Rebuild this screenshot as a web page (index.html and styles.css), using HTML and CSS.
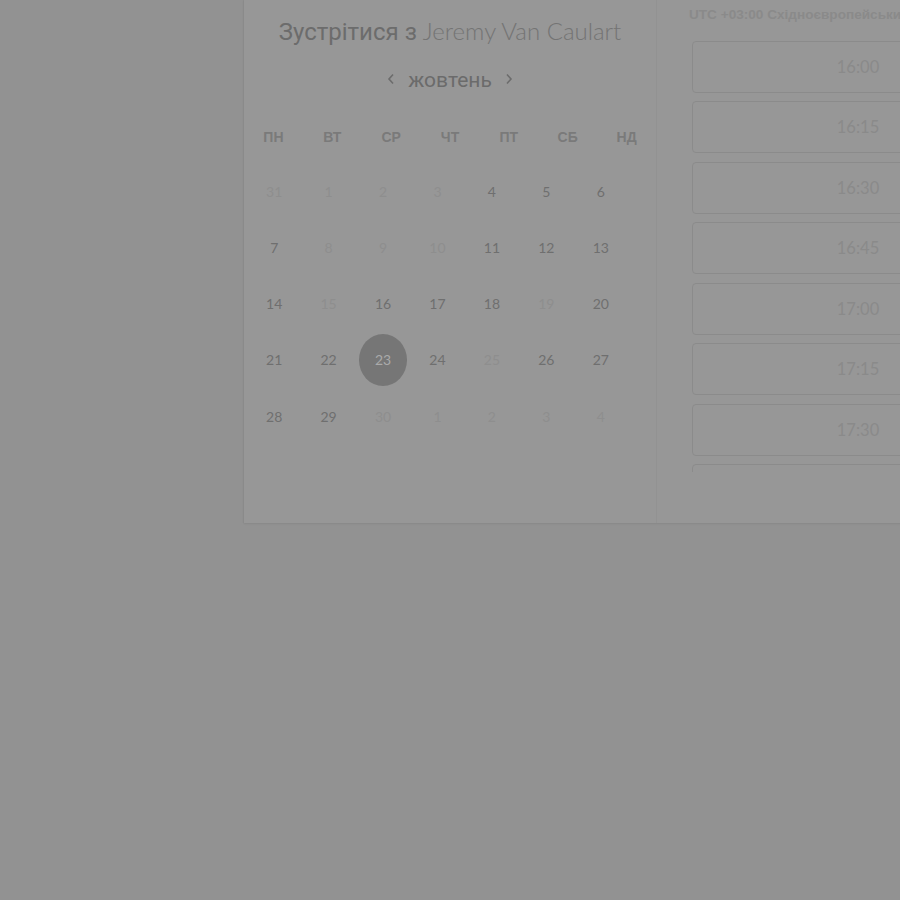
FILE: index.html
```html
<!DOCTYPE html>
<html lang="uk">
<head>
<meta charset="utf-8">
<title>Зустрітися з Jeremy Van Caulart</title>
<link rel="stylesheet" href="styles.css">
</head>
<body>
<div class="card">
  <section class="cal">
    <h1 class="title"><span class="title-uk">Зустрітися з</span> <span class="title-name">Jeremy Van Caulart</span></h1>
    <div class="month">
      <span class="chev">
        <svg width="8" height="12" viewBox="0 0 8 12"><path d="M6 1.5 L2 6 L6 10.5" fill="none" stroke="#6c6c6c" stroke-width="1.6"/></svg>
      </span>
      <span class="month-name">жовтень</span>
      <span class="chev">
        <svg width="8" height="12" viewBox="0 0 8 12"><path d="M2 1.5 L6 6 L2 10.5" fill="none" stroke="#6c6c6c" stroke-width="1.6"/></svg>
      </span>
    </div>
    <div class="weekdays">
      <span>ПН</span><span>ВТ</span><span>СР</span><span>ЧТ</span><span>ПТ</span><span>СБ</span><span>НД</span>
    </div>
    <div class="days">
      <span class="day off">31</span><span class="day off">1</span><span class="day off">2</span><span class="day off">3</span><span class="day">4</span><span class="day">5</span><span class="day">6</span>
      <span class="day">7</span><span class="day off">8</span><span class="day off">9</span><span class="day off">10</span><span class="day">11</span><span class="day">12</span><span class="day">13</span>
      <span class="day">14</span><span class="day off">15</span><span class="day">16</span><span class="day">17</span><span class="day">18</span><span class="day off">19</span><span class="day">20</span>
      <span class="day">21</span><span class="day">22</span><span class="day sel">23</span><span class="day">24</span><span class="day off">25</span><span class="day">26</span><span class="day">27</span>
      <span class="day">28</span><span class="day">29</span><span class="day off">30</span><span class="day off">1</span><span class="day off">2</span><span class="day off">3</span><span class="day off">4</span>
    </div>
  </section>
  <section class="times">
    <div class="tz">UTC +03:00 Східноєвропейський час</div>
    <div class="slots">
      <div class="slot">16:00</div>
      <div class="slot">16:15</div>
      <div class="slot">16:30</div>
      <div class="slot">16:45</div>
      <div class="slot">17:00</div>
      <div class="slot">17:15</div>
      <div class="slot">17:30</div>
      <div class="slot">17:45</div>
    </div>
  </section>
</div>
</body>
</html>
```
FILE: styles.css
```css
html, body {
  margin: 0;
  padding: 0;
}
body {
  background: #929292;
  height: 900px;
  overflow: hidden;
  font-family: "Roboto", "Liberation Sans", sans-serif;
}
.card {
  margin-left: 244px;
  width: 840px;
  height: 523px;
  display: flex;
  background: #979797;
  box-shadow: 0 1px 2px rgba(0, 0, 0, 0.07), -1px 0 1px rgba(0, 0, 0, 0.03);
}
.cal {
  width: 412px;
  flex: none;
  border-right: 1px solid #929292;
  display: flex;
  flex-direction: column;
}
.title {
  margin: 16px 0 0;
  font-weight: 400;
  font-size: 24px;
  line-height: 30px;
  text-align: center;
  white-space: nowrap;
}
.title-uk {
  font-family: "Roboto", sans-serif;
  color: #6c6c6c;
}
.title-name {
  font-family: "Lato", sans-serif;
  font-weight: 300;
  color: #747474;
}
.month {
  margin-top: 18px;
  height: 30px;
  display: flex;
  align-items: center;
  justify-content: center;
  gap: 12px;
}
.chev {
  display: flex;
  width: 10px;
  justify-content: center;
  margin-top: -3px;
}
.month-name {
  font-family: "Roboto", sans-serif;
  font-size: 21px;
  color: #6b6b6b;
  line-height: 30px;
}
.weekdays {
  margin-top: 33px;
  display: grid;
  grid-template-columns: repeat(7, 1fr);
  height: 18px;
  line-height: 18px;
  font-family: "Liberation Sans", Arial, sans-serif;
  font-weight: 700;
  font-size: 14px;
  color: #7a7a7a;
  text-align: center;
}
.days {
  margin: 19px 0 0 3px;
  width: 381px;
  display: grid;
  grid-template-columns: repeat(7, 1fr);
  grid-auto-rows: 52px;
  row-gap: 4.3px;
  justify-items: center;
  font-family: "Lato", sans-serif;
  font-size: 14px;
  color: #6f6f6f;
}
.day {
  width: 48px;
  height: 52px;
  display: flex;
  align-items: center;
  justify-content: center;
  border-radius: 50%;
}
.day.off {
  color: #8e8e8e;
}
.day.sel {
  background: #767676;
  color: #aaaaaa;
}
.times {
  flex: 1;
  padding-left: 35px;
  display: flex;
  flex-direction: column;
}
.tz {
  margin-top: 6px;
  height: 18px;
  line-height: 18px;
  font-family: "Liberation Sans", Arial, sans-serif;
  font-weight: 700;
  font-size: 13.6px;
  color: #8a8a8a;
  white-space: nowrap;
  margin-left: -3px;
}
.slots {
  margin-top: 17px;
  height: 431px;
  overflow: hidden;
  display: flex;
  flex-direction: column;
  gap: 8.43px;
  width: 332px;
}
.slot {
  flex: none;
  height: 50px;
  border: 1px solid #8b8b8b;
  border-radius: 4px;
  display: flex;
  align-items: center;
  justify-content: center;
  font-family: "Lato", sans-serif;
  font-size: 16.5px;
  color: #8a8a8a;
}
```
